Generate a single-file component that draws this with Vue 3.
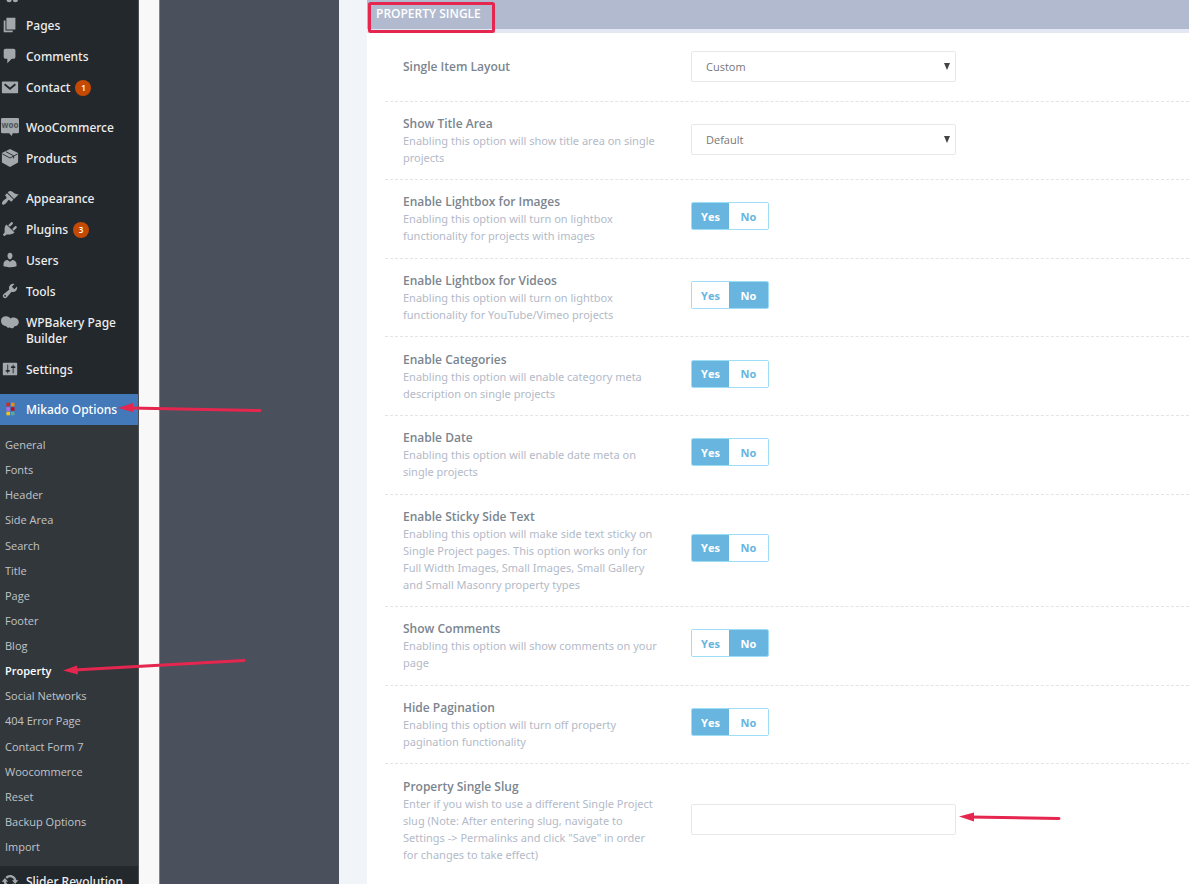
<script setup>
import { ref } from 'vue'

const groups = [
  [
    { label: 'Pages', icon: 'pages' },
    { label: 'Comments', icon: 'comments' },
    { label: 'Contact', icon: 'mail', badge: 1 },
  ],
  [
    { label: 'WooCommerce', icon: 'woo' },
    { label: 'Products', icon: 'box' },
  ],
  [
    { label: 'Appearance', icon: 'appearance' },
    { label: 'Plugins', icon: 'plugins', badge: 3 },
    { label: 'Users', icon: 'users' },
    { label: 'Tools', icon: 'tools' },
    { label: 'WPBakery Page Builder', icon: 'bakery' },
    { label: 'Settings', icon: 'settings' },
  ],
]

const paths = {
  pages: 'M6 15V2h10v13H6zm-1 1h8v2H3V5h2v11z',
  comments: 'M5 2h9q.82 0 1.41.59T16 4v7q0 .82-.59 1.41T14 13h-2l-5 5v-5H5q-.82 0-1.41-.59T3 11V4q0-.82.59-1.41T5 2z',
  appearance: 'M14.48 11.06L7.41 3.99l1.5-1.5c.5-.56 2.3-.47 3.51.32 1.21.8 1.43 1.28 2.91 2.1 1.18.64 2.45 1.26 4.45.85zm-.71.71L6.7 4.7 4.93 6.47c-.39.39-.39 1.02 0 1.41l1.06 1.06c.39.39.39 1.03 0 1.42-.6.6-1.43 1.11-2.21 1.69-.35.26-.7.53-1.01.84C1.43 14.23.4 16.08 1.4 17.07c.99 1 2.84-.03 4.18-1.36.31-.31.58-.66.85-1.02.57-.78 1.08-1.61 1.69-2.21.39-.39 1.02-.39 1.41 0l1.06 1.06c.39.39 1.02.39 1.41 0z',
  plugins: 'M13.11 4.36L9.87 7.6 8 5.73l3.24-3.24c.35-.34 1.05-.2 1.56.32.52.51.66 1.21.31 1.55zm-8 1.77l.91-1.12 9.01 9.01-1.19.84c-.71.71-2.63 1.16-3.82 1.16H6.14L4.9 17.26c-.59.59-1.54.59-2.12 0-.59-.58-.59-1.53 0-2.12l1.24-1.24v-3.88c0-1.13.4-3.19 1.09-3.89zm7.26 3.97l3.24-3.24c.34-.35 1.04-.21 1.55.31.52.51.66 1.21.31 1.55l-3.24 3.25z',
  users: 'M10 9.25c-2.27 0-2.73-3.44-2.73-3.44C7 4.02 7.82 2 9.97 2c2.16 0 2.98 2.02 2.71 3.81 0 0-.41 3.44-2.68 3.44zm0 2.57L12.72 10c2.39 0 4.52 2.33 4.52 4.53v2.49s-3.65 1.13-7.24 1.13c-3.65 0-7.24-1.13-7.24-1.13v-2.49c0-2.25 1.94-4.48 4.47-4.48z',
  tools: 'M16.68 9.77c-1.34 1.34-3.3 1.67-4.95.99l-5.41 6.52c-.99.99-2.59.99-3.58 0s-.99-2.59 0-3.57l6.52-5.42c-.68-1.65-.35-3.61.99-4.95 1.28-1.28 3.12-1.62 4.72-1.06l-2.89 2.89 2.82 2.82 2.86-2.87c.53 1.58.18 3.39-1.08 4.65zM3.81 16.21c.4.39 1.04.39 1.43 0 .4-.4.4-1.04 0-1.43-.39-.4-1.03-.4-1.43 0-.39.39-.39 1.03 0 1.43z',
  settings: 'M18 16V4c0-.55-.45-1-1-1H3c-.55 0-1 .45-1 1v12c0 .55.45 1 1 1h14c.55 0 1-.45 1-1zM8 11h1c.55 0 1 .45 1 1s-.45 1-1 1H8v1.5c0 .28-.22.5-.5.5s-.5-.22-.5-.5V13H6c-.55 0-1-.45-1-1s.45-1 1-1h1V5.5c0-.28.22-.5.5-.5s.5.22.5.5V11zm5-2h-1c-.55 0-1-.45-1-1s.45-1 1-1h1V5.5c0-.28.22-.5.5-.5s.5.22.5.5V7h1c.55 0 1 .45 1 1s-.45 1-1 1h-1v5.5c0 .28-.22.5-.5.5s-.5-.22-.5-.5V9z',
  bakery: 'M0 8.500C0 5.600 2.600 3.500 5.800 3.700c2.300.1 3.900 1.300 4.800 2.500.8-1 2.500-1.500 4.400-1.100C18 5.700 20 7.800 19.800 10.500c-.3 2.700-2.400 4.200-5 4.100-.3 1.600-1.500 2.500-3 2.400-.8 0-1.400-.3-1.800-.8-1.900.5-3.700 0-4.300-1.800C2.200 14.200 0 11.700 0 8.500z',
}

const submenu = [
  'General', 'Fonts', 'Header', 'Side Area', 'Search', 'Title', 'Page', 'Footer', 'Blog',
  'Property', 'Social Networks', '404 Error Page', 'Contact Form 7', 'Woocommerce',
  'Reset', 'Backup Options', 'Import',
]

const fields = ref([
  { id: 'layout', title: 'Single Item Layout', type: 'select', value: 'Custom' },
  { id: 'title-area', title: 'Show Title Area', text: 'Enabling this option will show title area on single\nprojects', type: 'select', value: 'Default' },
  { id: 'lightbox-images', title: 'Enable Lightbox for Images', text: 'Enabling this option will turn on lightbox\nfunctionality for projects with images', type: 'switch', value: true },
  { id: 'lightbox-videos', title: 'Enable Lightbox for Videos', text: 'Enabling this option will turn on lightbox\nfunctionality for YouTube/Vimeo projects', type: 'switch', value: false },
  { id: 'categories', title: 'Enable Categories', text: 'Enabling this option will enable category meta\ndescription on single projects', type: 'switch', value: true },
  { id: 'date', title: 'Enable Date', text: 'Enabling this option will enable date meta on\nsingle projects', type: 'switch', value: true },
  { id: 'sticky', title: 'Enable Sticky Side Text', text: 'Enabling this option will make side text sticky on\nSingle Project pages. This option works only for\nFull Width Images, Small Images, Small Gallery\nand Small Masonry property types', type: 'switch', value: true },
  { id: 'comments', title: 'Show Comments', text: 'Enabling this option will show comments on your\npage', type: 'switch', value: false },
  { id: 'pagination', title: 'Hide Pagination', text: 'Enabling this option will turn off property\npagination functionality', type: 'switch', value: true },
  { id: 'slug', title: 'Property Single Slug', text: 'Enter if you wish to use a different Single Project\nslug (Note: After entering slug, navigate to\nSettings -> Permalinks and click "Save" in order\nfor changes to take effect)', type: 'text', value: '' },
])
</script>

<template>
  <div class="page">
    <nav class="sidebar" aria-label="Admin menu">
      <div class="cut-item">
        <svg class="icon" viewBox="0 0 20 20" aria-hidden="true">
          <circle cx="9" cy="15" r="3" /><circle cx="16" cy="15" r="3" />
        </svg>
      </div>
      <ul v-for="(group, g) in groups" :key="g" class="group">
        <li v-for="item in group" :key="item.label">
          <a href="#" class="item">
            <svg class="icon" viewBox="0 0 20 20" aria-hidden="true">
              <template v-if="item.icon === 'mail'">
                <rect x="1" y="4" width="18" height="13" rx="1" />
                <path d="M4 7l6 5 6-5" class="carve" />
              </template>
              <template v-else-if="item.icon === 'woo'">
                <path d="M1.500 0h17Q20 0 20 1.500v14q0 1.500-1.500 1.500H13l-1 3-3-3H1.500Q0 17 0 15.500v-14Q0 0 1.500 0z" />
                <text x="10" y="11" class="woo-mark">woo</text>
              </template>
              <template v-else-if="item.icon === 'box'">
                <path d="M10 0l9 4.500v10.500l-9 5-9-5V4.500z" />
                <path d="M1.500 5.500L10 10l8.500-4.500M5.500 3l8.500 4.500v3" class="carve thin" />
              </template>
              <path v-else :d="paths[item.icon]" />
            </svg>
            <span class="item-text">{{ item.label }}</span>
            <span v-if="item.badge" class="badge">{{ item.badge }}</span>
          </a>
        </li>
      </ul>
      <a href="#" class="item active">
        <svg class="icon" viewBox="0 0 20 20" aria-hidden="true">
          <rect x="6" y="3" width="4" height="4" fill="#d8281c" />
          <rect x="11" y="3" width="4" height="4" fill="#ee8a12" />
          <rect x="6" y="8" width="4" height="4" fill="#b668f0" />
          <rect x="11" y="8" width="4" height="4" fill="#c4081c" />
          <rect x="6" y="13" width="4" height="4" fill="#f8c414" />
          <rect x="11" y="13" width="4" height="4" fill="#5aa8a0" />
        </svg>
        <span class="item-text">Mikado Options</span>
      </a>
      <ul class="submenu">
        <li v-for="name in submenu" :key="name">
          <a href="#" :class="{ current: name === 'Property' }">{{ name }}</a>
        </li>
      </ul>
      <div class="bottom-slot">
        <a href="#" class="item">
          <svg class="icon" viewBox="0 0 20 20" aria-hidden="true">
            <path d="M10.200 3.280c3.530 0 6.430 2.610 6.920 6h2.080l-3.500 4-3.500-4h2.320c-.45-1.970-2.210-3.450-4.320-3.450-1.450 0-2.730.71-3.540 1.780L4.950 5.660C6.230 4.200 8.110 3.280 10.200 3.280zm-.4 13.440c-3.520 0-6.430-2.610-6.920-6H.8l3.500-4c1.170 1.330 2.330 2.670 3.500 4H5.480c.45 1.970 2.210 3.450 4.320 3.450 1.450 0 2.730-.71 3.540-1.780l1.710 1.950c-1.280 1.460-3.150 2.380-5.250 2.380z" />
          </svg>
          <span class="item-text">Slider Revolution</span>
        </a>
      </div>
    </nav>

    <div class="options-rail"></div>

    <main class="content">
      <section class="panel">
        <header class="panel-head">
          <h2>Property Single</h2>
        </header>
        <form class="rows" @submit.prevent>
          <div v-for="field in fields" :key="field.id" class="row">
            <div class="info">
              <component :is="field.type === 'switch' ? 'h3' : 'label'" :id="`${field.id}-label`" class="title" :for="field.type === 'switch' ? undefined : field.id">{{ field.title }}</component>
              <p v-if="field.text">{{ field.text }}</p>
            </div>
            <div v-if="field.type === 'select'" class="select">
              <select :id="field.id" v-model="field.value">
                <option>Default</option>
                <option>Custom</option>
              </select>
              <svg viewBox="0 0 6 7" aria-hidden="true"><path d="M0 0h6L3 7z" /></svg>
            </div>
            <div v-else-if="field.type === 'switch'" class="switch" role="group" :aria-labelledby="`${field.id}-label`">
              <button type="button" :class="{ on: field.value }" :aria-pressed="field.value" @click="field.value = true">Yes</button>
              <button type="button" :class="{ on: !field.value }" :aria-pressed="!field.value" @click="field.value = false">No</button>
            </div>
            <input v-else :id="field.id" v-model="field.value" type="text" class="text-input">
          </div>
        </form>
      </section>
    </main>

    <svg class="marks" width="1100" height="884" viewBox="0 0 1100 884" aria-hidden="true">
      <rect x="369.500" y="3.500" width="124" height="28" rx="1" />
      <path d="M130 408L260 410.500M74 670L244 660.500M970 817L1059 818.500" />
      <path class="head" d="M118 408l15-5v9zM63 670.500l14-5 1 9zM959 816.500l15-4v9z" />
    </svg>
  </div>
</template>

<style>
body {
  margin: 0;
}
</style>

<style scoped>
.page {
  position: relative;
  display: flex;
  min-height: 100vh;
  overflow: hidden;
  background: #f8f8f8;
  font-family: "Open Sans", "Noto Sans", sans-serif;
}

ul,
h2,
h3,
p {
  margin: 0;
  padding: 0;
  list-style: none;
}

a {
  color: inherit;
  text-decoration: none;
}

.sidebar {
  display: flex;
  flex: none;
  flex-direction: column;
  box-sizing: border-box;
  width: 139px;
  margin-right: 20px;
  border-right: 1px solid #4c5055;
  background: #23282d;
  color: #eee;
}

.cut-item {
  display: flex;
  align-items: flex-start;
  height: 10px;
  padding-left: 1px;
  overflow: hidden;
}

.cut-item .icon {
  margin-top: -14px;
}

.group {
  margin-bottom: 9px;
}

.item {
  display: flex;
  align-items: flex-start;
  gap: 7px;
  padding: 8px 0 7px 1px;
  font-family: "Noto Sans", "Open Sans", sans-serif;
  font-size: 12px;
  font-weight: 500;
  line-height: 16px;
}

.icon {
  flex: none;
  width: 18px;
  height: 18px;
  margin-top: -2px;
  fill: #a3a8ad;
}

.item .icon {
  margin-bottom: -1px;
}

.carve {
  fill: none;
  stroke: #23282d;
  stroke-width: 2;
}

.thin {
  stroke-width: 1;
}

.woo-mark {
  fill: #50555a;
  font-size: 9px;
  font-weight: 700;
  text-anchor: middle;
}

.badge {
  width: 16px;
  height: 16px;
  margin-left: -2px;
  border-radius: 8px;
  background: #c44a04;
  color: #fff;
  font-size: 8px;
  font-weight: 600;
  line-height: 16px;
  text-align: center;
}

.active {
  background: #4379b8;
  color: #fff;
}

.submenu {
  display: flex;
  flex: 1;
  flex-direction: column;
  padding: 7px 0;
  background: #32373c;
  color: #c0c4c8;
  font-size: 11px;
  line-height: 25px;
}

.submenu li {
  flex: 1;
  padding-left: 5px;
}

.current {
  color: #fff;
  font-weight: 600;
}

.bottom-slot {
  height: 18px;
  overflow: hidden;
}

.options-rail {
  flex: none;
  box-sizing: border-box;
  width: 180px;
  border-left: 1px solid #7d828b;
  background: #4b505d;
}

.content {
  display: flex;
  flex: 1;
  min-width: 0;
  padding-left: 28px;
  background: #f1f4f8;
}

.panel {
  display: flex;
  flex: 1;
  flex-direction: column;
  min-width: 0;
  background: #fff;
}

.panel-head {
  padding: 5px 9px 6px;
  border-bottom: 4px solid #e2e7f1;
  background: #b2bad0;
  color: #fff;
}

.panel-head h2 {
  font-size: 12px;
  font-weight: 600;
  line-height: 18px;
  text-transform: uppercase;
}

.rows {
  display: flex;
  flex: 1;
  flex-direction: column;
  padding: 0 0 8px 18px;
}

.row {
  display: grid;
  flex: 1 0 auto;
  grid-template-columns: 288px minmax(0, 265px);
  align-items: center;
  padding: 13px 0 13px 18px;
  border-bottom: 1px dashed #e2e4e6;
}

.row:first-child {
  min-height: 41px;
}

.row:last-child {
  border-bottom: 0;
}

.title {
  display: block;
  color: #7b858f;
  font-size: 12px;
  font-weight: 600;
  line-height: 17px;
}

.info p {
  color: #b3bac8;
  font-family: "Noto Sans", "Open Sans", sans-serif;
  font-size: 11px;
  line-height: 17px;
  white-space: pre-line;
}

.select {
  position: relative;
}

.row + .row .select,
.text-input {
  margin-bottom: 2px;
}

.select select,
.text-input {
  display: block;
  box-sizing: border-box;
  width: 100%;
  height: 31px;
  padding: 0 14px;
  border: 1px solid #e8e8e8;
  border-radius: 2px;
  outline: none;
  appearance: none;
  background: #fff;
  color: #777;
  font-family: inherit;
  font-size: 11px;
}

.select svg {
  position: absolute;
  top: 12px;
  right: 6px;
  width: 6px;
  height: 7px;
  fill: #444;
}

.switch {
  display: grid;
  grid-template-columns: 37px 1fr;
  box-sizing: border-box;
  width: 78px;
  height: 28px;
  margin-bottom: 5px;
  overflow: hidden;
  border: 1px solid #9fdcf6;
  border-radius: 2px;
}

.switch button {
  padding: 0;
  border: 0;
  background: #fff;
  color: #68b5e0;
  font-family: inherit;
  font-size: 11px;
  font-weight: 700;
}

.switch .on {
  background: #68b5e0;
  color: #fff;
}

.marks {
  position: absolute;
  top: 0;
  left: 0;
  fill: none;
  stroke: #e5264f;
  stroke-width: 3;
  stroke-linecap: round;
  pointer-events: none;
}

.marks .head {
  fill: #e5264f;
  stroke: none;
}
</style>
